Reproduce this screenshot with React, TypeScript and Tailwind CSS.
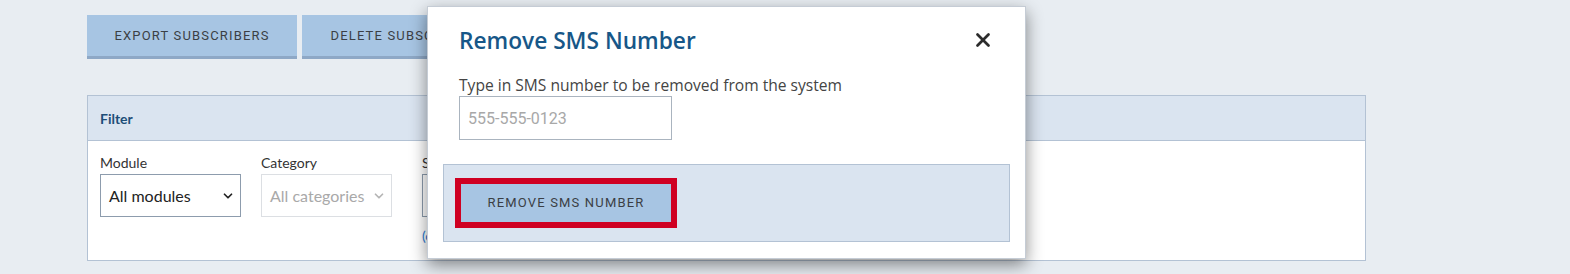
import { X, ChevronDown } from "lucide-react";

const sans = "font-['Roboto','Noto_Sans',sans-serif]";
const modalFont = "font-['Open_Sans','Noto_Sans',sans-serif]";
const muli = "font-['Lato','Noto_Sans',sans-serif]";

function ActionButton({ label, width }: { label: string; width: string }) {
  return (
    <button
      className={`${sans} ${width} h-[44px] bg-[#a7c5e3] border-b-[3px] border-[#8ea8c6] text-[13px] tracking-[0.09em] uppercase text-[#3b3f45] whitespace-nowrap overflow-hidden`}
    >
      {label}
    </button>
  );
}

function FakeSelect({ value, disabled, width }: { value: string; disabled?: boolean; width: string }) {
  return (
    <div
      className={`${width} h-[43px] flex items-center justify-between pl-[8px] pr-[5px] bg-white border ${
        disabled ? "border-[#dcdfe3] text-[#a9a9a9]" : "border-[#8d9cad] text-[#222]"
      } text-[16px] whitespace-nowrap overflow-hidden`}
    >
      <span>{value}</span>
      <ChevronDown size={14} strokeWidth={3} className={disabled ? "text-[#b5b5b5]" : "text-[#222]"} />
    </div>
  );
}

export default function App() {
  return (
    <div className="relative w-[1570px] h-[274px] bg-[#e8edf2] overflow-hidden">
      <div className="pl-[87px] pt-[15px]">
        <div className="flex gap-[5px]">
          <ActionButton label="Export subscribers" width="w-[210px]" />
          <ActionButton label="Delete subscribers" width="w-[210px]" />
        </div>

        {/* Filter panel */}
        <div className="mt-[36px] w-[1279px] border border-[#b3c2d4]">
          <div className={`${muli} h-[45px] flex items-center px-[12px] bg-[#dae4f0] border-b border-[#b3c2d4] text-[14px] font-bold text-[#1d4e78]`}>
            Filter
          </div>
          <div className={`${muli} bg-white h-[119px] flex gap-[20px] px-[12px] pt-[13px]`}>
            <div className="flex flex-col gap-[3px]">
              <span className="text-[14px] text-[#333] leading-[17px]">Module</span>
              <FakeSelect value="All modules" width="w-[141px]" />
            </div>
            <div className="flex flex-col gap-[3px]">
              <span className="text-[14px] text-[#333] leading-[17px]">Category</span>
              <FakeSelect value="All categories" width="w-[131px]" disabled />
            </div>
            <div className="flex flex-col gap-[3px] ml-[10px]">
              <span className="text-[14px] text-[#333] leading-[17px]">Status</span>
              <FakeSelect value="All" width="w-[140px]" />
              <span className="text-[14px] text-[#2b7cd3] mt-[5px]">(clear)</span>
            </div>
          </div>
        </div>
      </div>

      {/* Modal */}
      <div className={`${modalFont} absolute left-[427px] top-[6px] w-[599px] h-[253px] bg-white border border-[#c5ccd5] shadow-[0_6px_16px_rgba(0,0,0,0.45)]`}>
        <div className="flex items-center justify-between pl-[31px] pr-[31px] pt-[22px]">
          <h2 className="text-[22.7px] font-semibold text-[#175788] leading-[24px]">Remove SMS Number</h2>
          <X size={22} strokeWidth={3} className="text-[#2c2c2c] -mt-[2px]" />
        </div>
        <div className="px-[31px] mt-[23px]">
          <p className="text-[15.6px] text-[#444] leading-[18px] whitespace-nowrap">Type in SMS number to be removed from the system</p>
          <input
            className={`${sans} mt-[2px] w-[213px] h-[44px] border border-[#aab4bf] px-[8px] text-[16px] text-[#333] placeholder:text-[#a8a8a8] outline-none`}
            placeholder="555-555-0123"
          />
        </div>
        <div className="mx-[15px] mt-[24px] h-[78px] bg-[#dae4f0] border border-[#b3c2d4] pl-[11px] pt-[13px]">
          <div className="w-[222px] h-[50px] border-[6px] border-[#cf0022]">
            <button className={`${sans} w-full h-full bg-[#a7c5e3] text-[13px] tracking-[0.09em] uppercase text-[#3b3f45]`}>
              Remove SMS Number
            </button>
          </div>
        </div>
      </div>
    </div>
  );
}
